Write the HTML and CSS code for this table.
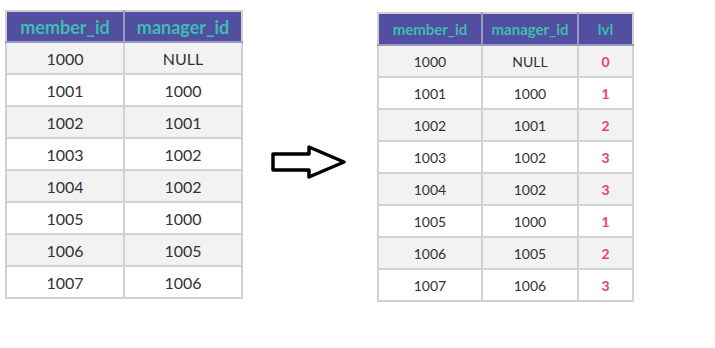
FILE: index.html
```html
<!DOCTYPE html>
<html>
<head>
<meta charset="utf-8">
<link rel="stylesheet" href="styles.css">
</head>
<body>
<div class="page">
  <table class="tbl big">
    <thead><tr><th class="c1">member_id</th><th class="c2">manager_id</th></tr></thead>
    <tbody>
      <tr><td>1000</td><td>NULL</td></tr>
      <tr><td>1001</td><td>1000</td></tr>
      <tr><td>1002</td><td>1001</td></tr>
      <tr><td>1003</td><td>1002</td></tr>
      <tr><td>1004</td><td>1002</td></tr>
      <tr><td>1005</td><td>1000</td></tr>
      <tr><td>1006</td><td>1005</td></tr>
      <tr><td>1007</td><td>1006</td></tr>
    </tbody>
  </table>
  <svg class="arrow" width="80" height="36" viewBox="0 0 80 36">
    <path d="M2 10 L38 10 L38 3 L73 18 L38 33 L38 26 L2 26 Z" fill="#fff" stroke="#000" stroke-width="3.5" stroke-linejoin="round"/>
  </svg>
  <table class="tbl small">
    <thead><tr><th class="d1">member_id</th><th class="d2">manager_id</th><th class="d3">lvl</th></tr></thead>
    <tbody>
      <tr><td>1000</td><td>NULL</td><td class="lvl">0</td></tr>
      <tr><td>1001</td><td>1000</td><td class="lvl">1</td></tr>
      <tr><td>1002</td><td>1001</td><td class="lvl">2</td></tr>
      <tr><td>1003</td><td>1002</td><td class="lvl">3</td></tr>
      <tr><td>1004</td><td>1002</td><td class="lvl">3</td></tr>
      <tr><td>1005</td><td>1000</td><td class="lvl">1</td></tr>
      <tr><td>1006</td><td>1005</td><td class="lvl">2</td></tr>
      <tr><td>1007</td><td>1006</td><td class="lvl">3</td></tr>
    </tbody>
  </table>
</div>
</body>
</html>
```
FILE: styles.css
```css
html, body {
  margin: 0;
  padding: 0;
  background: #fff;
}
.page {
  display: flex;
  align-items: flex-start;
  padding: 10px 0 0 5px;
  font-family: Lato, "Liberation Sans", sans-serif;
}
.tbl {
  border-collapse: collapse;
  table-layout: fixed;
}
.tbl th, .tbl td {
  border: 2px solid #d2d2d2;
  text-align: center;
  padding: 0;
}
.tbl th {
  background: #524fa0;
  color: #3dbdb0;
  font-weight: bold;
  border-color: #9c9ac4;
}
.tbl thead tr th { border-top-color: #cfcfcf; }
.tbl thead tr th:first-child { border-left-color: #cfcfcf; }
.tbl thead tr th:last-child { border-right-color: #cfcfcf; }
.tbl td {
  color: #333;
}
.tbl tbody tr:nth-child(odd) td { background: #f2f2f2; }
.tbl tbody tr:nth-child(even) td { background: #fff; }

.big th { font-size: 18px; height: 29px; }
.big td { font-size: 16px; height: 30px; }
.big .c1 { width: 116px; }
.big .c2 { width: 116px; }

.arrow {
  margin: 134px 0 0 28px;
  flex: none;
}

.small { margin-left: 26px; margin-top: 2px; }
.small th { font-size: 15px; height: 30px; }
.small td { font-size: 14px; height: 30px; }
.small .d1 { width: 102px; }
.small .d2 { width: 94px; }
.small .d3 { width: 53px; }
.small .lvl {
  color: #ee3f66;
  font-weight: bold;
  font-size: 14px;
}
```
